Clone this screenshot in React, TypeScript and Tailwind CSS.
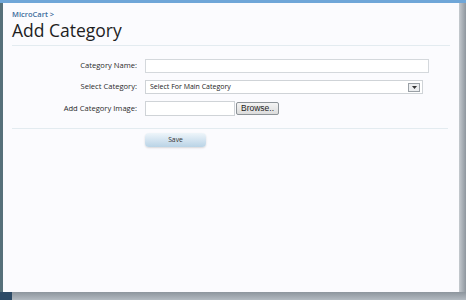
import React from "react";

const App = () => {
  return (
    <div className="w-[466px] h-[300px] flex flex-col bg-[#a9b1b9] overflow-hidden" style={{ fontFamily: "'Open Sans', sans-serif" }}>
      <div className="h-[3px] bg-[#6fa6d8]" />

      <div className="flex flex-1">
        <div className="w-[3px] bg-[#56707a]" />

        <div className="flex-1 bg-[#fbfbfe] flex flex-col">
          <div className="px-[9px] pt-[8px]">
            <div className="text-[7.5px] font-semibold text-[#3b6c9c] leading-none">MicroCart &gt;</div>
            <h1 className="text-[17.5px] text-[#1e1e1e] leading-none mt-[3px]">Add Category</h1>
          </div>

          <div className="mx-[9px] mt-[6px] h-px bg-[#e3ebf0]" />

          <div className="grid grid-cols-[134px_1fr] gap-x-[8px] gap-y-[7px] mt-[13px] items-center text-[7.6px] text-[#2a2a2a]">
            <div className="text-right">Category Name:</div>
            <div className="h-[14px] w-[284px] border border-[#d4d8dc] bg-white" />

            <div className="text-right">Select Category:</div>
            <div className="h-[14px] w-[278px] border border-[#cfd3d7] bg-white flex items-center justify-between pl-[4px] pr-[2px]">
              <span className="text-[7px] text-[#222]">Select For Main Category</span>
              <span className="w-[12px] h-[9px] border border-[#9aa0a6] bg-[#eceef0] flex items-center justify-center">
                <svg width="5" height="3" viewBox="0 0 5 3">
                  <path d="M0 0h5L2.5 3z" fill="#333" />
                </svg>
              </span>
            </div>

            <div className="text-right">Add Category Image:</div>
            <div className="flex items-center gap-[1px]">
              <div className="h-[15px] w-[90px] border border-[#cfd3d7] bg-white" />
              <div className="h-[13px] px-[4px] border border-[#8d9398] rounded-[2px] bg-gradient-to-b from-[#f4f4f4] to-[#dcdcdc] flex items-center text-[8.5px] text-[#222]" style={{ fontFamily: "'Liberation Sans', sans-serif" }}>
                Browse..
              </div>
            </div>
          </div>

          <div className="mx-[9px] mt-[12px] h-px bg-[#e3ebf0] w-[436px]" />

          <div className="pl-[142px] mt-[4px]">
            <div className="w-[61px] h-[14px] rounded-[4px] bg-gradient-to-b from-[#eef5fa] to-[#b9d3e6] shadow-[0_1px_2px_rgba(0,0,0,0.15)] flex items-center justify-center text-[6.8px] text-[#333]">
              Save
            </div>
          </div>
        </div>

        <div className="w-[7px] bg-gradient-to-r from-[#c5cacf] to-[#8e969e]" />
      </div>

      <div className="h-[8px] flex">
        <div className="w-[12px] bg-[#2c4a66]" />
        <div className="flex-1 bg-gradient-to-b from-[#8d959d] to-[#b3bac1]" />
      </div>
    </div>
  );
};

export default App;
